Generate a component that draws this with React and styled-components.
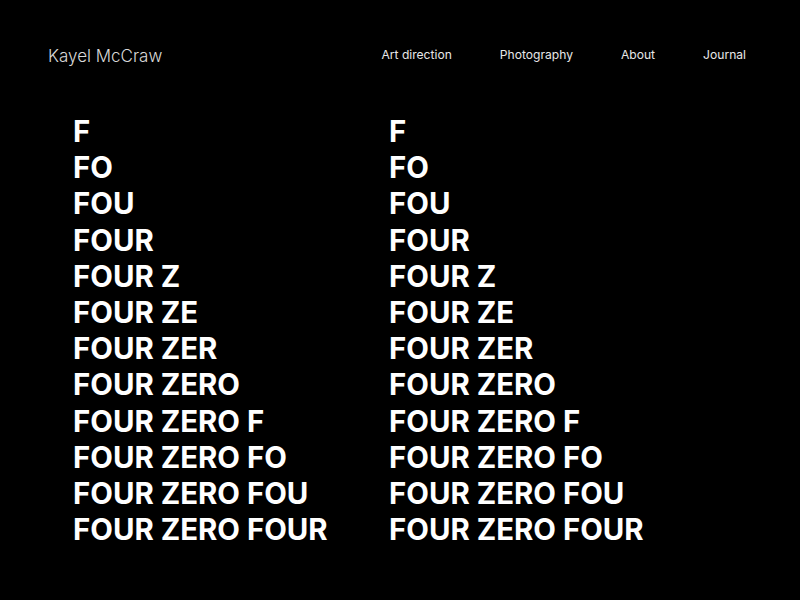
import React from "react";
import styled, { createGlobalStyle } from "styled-components";

const GlobalStyle = createGlobalStyle`
  html, body {
    margin: 0;
    padding: 0;
    background: #000;
  }
  body {
    font-family: Inter, "Noto Sans", sans-serif;
    color: #fff;
  }
`;

const Page = styled.div`
  width: 800px;
  height: 600px;
  background: #000;
  overflow: hidden;
`;

const Header = styled.header`
  display: flex;
  align-items: center;
  justify-content: space-between;
  padding: 44px 54px 0 48px;
  height: 22px;
`;

const Logo = styled.div`
  font-size: 17px;
  font-weight: 300;
  color: #d8d8d8;
  margin-top: 1px;
`;

const Nav = styled.nav`
  display: flex;
  gap: 48px;
  margin-top: -2px;
`;

const NavLink = styled.a`
  font-size: 12.1px;
  font-weight: 400;
  color: #e8e8e8;
  text-decoration: none;
`;

const Columns = styled.main`
  display: flex;
  padding: 48px 0 0 73px;
`;

const Column = styled.div`
  width: 316px;
  display: flex;
  flex-direction: column;
`;

const Line = styled.div`
  font-size: 29.4px;
  font-weight: 700;
  line-height: 36.2px;
  white-space: nowrap;
`;

const word = "FOUR ZERO FOUR";
const lines = [];
for (let i = 1; i <= word.length; i++) {
  const s = word.slice(0, i);
  if (!s.endsWith(" ")) lines.push(s);
}

export default function App() {
  return (
    <Page>
      <GlobalStyle />
      <Header>
        <Logo>Kayel McCraw</Logo>
        <Nav>
          <NavLink>Art direction</NavLink>
          <NavLink>Photography</NavLink>
          <NavLink>About</NavLink>
          <NavLink>Journal</NavLink>
        </Nav>
      </Header>
      <Columns>
        {[0, 1].map((c) => (
          <Column key={c}>
            {lines.map((l) => (
              <Line key={l}>{l}</Line>
            ))}
          </Column>
        ))}
      </Columns>
    </Page>
  );
}
